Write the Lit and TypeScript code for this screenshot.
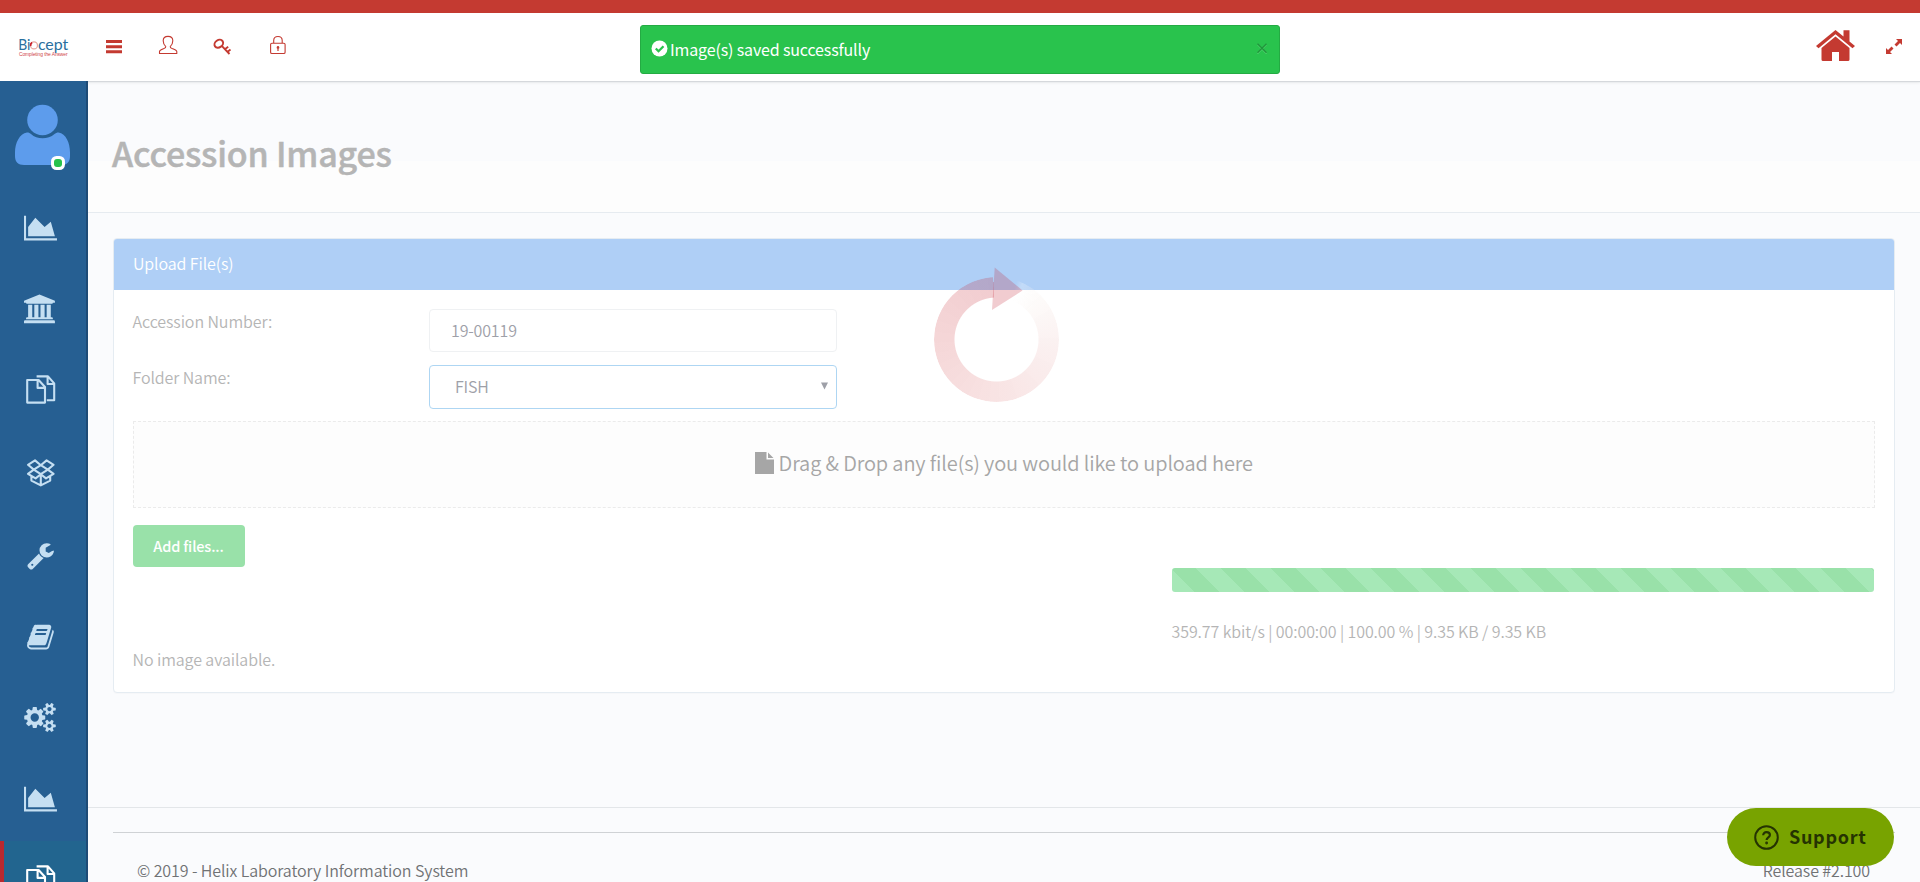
import { LitElement, html, svg, css } from "lit";
import { customElement } from "lit/decorators.js";

const chart = svg`<path transform="translate(24 25.6) scale(.0161)" d="M2048 1536v128h-2048v-1536h128v1408h1920zm-384-1024l256 896h-1664v-576l448-576 576 576z"/>`;
const bank = svg`<path transform="translate(24 24.5) scale(.0161)" d="M960 0l960 384v128h-128q0 26-20.5 45t-48.5 19h-1526q-28 0-48.5-19t-20.5-45h-128v-128zm-704 640h256v768h128v-768h256v768h128v-768h256v768h128v-768h256v768h59q28 0 48.5 19t20.5 45v64h-1664v-64q0-26 20.5-45t48.5-19h59v-768zm1595 960q28 0 48.5 19t20.5 45v128h-1920v-128q0-26 20.5-45t48.5-19h1782z"/>`;
const files = svg`<g fill="none" stroke="currentColor" stroke-width="2.1" stroke-linejoin="round"><path d="M27.2 29H38.6L45 36V51.6H27.2ZM37.6 29V36.9H45"/><path d="M36.6 25.4H48L54.2 32.4V49.2H46.8M47.6 25.4V33H54.2"/></g>`;
const box = svg`<g fill="none" stroke="currentColor" stroke-width="2.1" stroke-linejoin="round"><path d="M35 27.4L40.8 32.2L33.8 36.6L28 31.8ZM46.6 27.4L40.8 32.2L47.8 36.6L53.6 31.8ZM33.8 36.6L40.8 41.2L35.6 45.4L28 40.8ZM47.8 36.6L40.8 41.2L46 45.4L53.6 40.8ZM40.8 32.2L47.8 36.6M31.4 43.2V47.6L40.8 52.4L50.2 47.6V43.2M40.8 41.5V52.4"/></g>`;
const wrench = svg`<path transform="translate(26.1 27.1) scale(.0161)" d="M448 1472q0-26-19-45t-45-19-45 19-19 45 19 45 45 19 45-19 19-45zm644-420l-682 682q-37 37-90 37-52 0-91-37l-106-108q-38-36-38-90 0-53 38-91l681-681q39 98 114.5 173.5t173.5 114.5zm634-435q0 39-23 106-47 134-164.5 217.5t-258.5 83.5q-185 0-316.5-131.5t-131.5-316.5 131.5-316.5 316.5-131.5q58 0 121.5 16.5t107.5 46.5q16 11 16 28t-16 28l-293 169v224l193 107q5-3 79-48.5t135.5-81 70.5-35.5q15 0 23.5 10t8.5 25z"/>`;
const book = svg`<path transform="translate(26 26.7) scale(.0161)" d="M1703 478q40 57 18 129l-275 906q-19 64-76.5 107.5t-122.5 43.5h-923q-77 0-148.5-53.5t-99.5-131.5q-24-67-2-127 0-4 3-27t4-37q1-8-3-21.5t-3-19.5q2-11 8-21t16.5-23.5 16.5-23.5q23-38 45-91.5t30-91.5q3-10 .5-30t-.5-28q3-11 17-28t17-23q21-36 42-92t25-90q1-9-2.5-32t.5-28q4-13 22-30.5t22-22.5q19-26 42.5-84.5t27.5-96.5q1-8-3-25.5t-2-26.5q2-8 9-18t18-23 17-21q8-12 16.5-30.5t15-35 16-36 19.5-32 26.5-23.5 36-11.5 47.5 5.5l-1 3q38-9 51-9h761q74 0 114 56t18 130l-274 906q-36 119-71.5 153.5t-128.5 34.5h-869q-27 0-38 15-11 16-1 43 24 70 144 70h923q29 0 56-15.5t35-41.5l300-987q7-22 5-57 38 15 59 43zm-1064 2q-4 13 2 22.5t20 9.5h608q13 0 25.5-9.5t16.5-22.5l21-64q4-13-2-22.5t-20-9.5h-608q-13 0-25.5 9.5t-16.5 22.5zm-83 256q-4 13 2 22.5t20 9.5h608q13 0 25.5-9.5t16.5-22.5l21-64q4-13-2-22.5t-20-9.5h-608q-13 0-25.5 9.5t-16.5 22.5z"/>`;
const cogs = svg`<path transform="translate(25.3 25.8) scale(.0164)" d="M832 896q0-106-75-181t-181-75-181 75-75 181 75 181 181 75 181-75 75-181zm768 512q0-52-38-90t-90-38-90 38-38 90q0 53 37.5 90.5t90.5 37.5 90.5-37.5 37.5-90.5zm0-1024q0-52-38-90t-90-38-90 38-38 90q0 53 37.5 90.5t90.5 37.5 90.5-37.5 37.5-90.5zm-384 421v185q0 10-7 19.5t-16 10.5l-155 24q-11 35-32 76 34 48 90 115 7 11 7 20 0 12-7 19-23 30-82.5 89.5t-78.5 59.5q-11 0-21-7l-115-90q-37 19-77 31-11 108-23 155-7 24-30 24h-186q-11 0-20-7.5t-10-17.5l-23-153q-34-10-75-31l-118 89q-7 7-20 7-11 0-21-8-144-133-144-160 0-9 7-19 10-14 41-53t47-61q-23-44-35-82l-152-24q-10-1-17-9.5t-7-19.5v-185q0-10 7-19.5t16-10.5l155-24q11-35 32-76-34-48-90-115-7-11-7-20 0-12 7-20 22-30 82-89t79-59q11 0 21 7l115 90q34-18 77-32 11-108 23-154 7-24 30-24h186q11 0 20 7.5t10 17.5l23 153q34 10 75 31l118-89q8-7 20-7 11 0 21 8 144 133 144 160 0 8-7 19-12 16-42 54t-45 60q23 48 34 82l152 23q10 2 17 10.5t7 19.5zm640 533v140q0 16-149 31-12 27-30 52 51 113 51 138 0 4-4 7-122 71-124 71-8 0-46-47t-52-68q-20 2-30 2t-30-2q-14 21-52 68t-46 47q-2 0-124-71-4-3-4-7 0-25 51-138-18-25-30-52-149-15-149-31v-140q0-16 149-31 13-29 30-52-51-113-51-138 0-4 4-7 4-2 35-20t59-34 30-16q8 0 46 46.5t52 67.5q20-2 30-2t30 2q51-71 92-112l6-2q4 0 124 70 4 3 4 7 0 25-51 138 17 23 30 52 149 15 149 31zm0-1024v140q0 16-149 31-12 27-30 52 51 113 51 138 0 4-4 7-122 71-124 71-8 0-46-47t-52-68q-20 2-30 2t-30-2q-14 21-52 68t-46 47q-2 0-124-71-4-3-4-7 0-25 51-138-18-25-30-52-149-15-149-31v-140q0-16 149-31 13-29 30-52-51-113-51-138 0-4 4-7 4-2 35-20t59-34 30-16q8 0 46 46.5t52 67.5q20-2 30-2t30 2q51-71 92-112l6-2q4 0 124 70 4 3 4 7 0 25-51 138 17 23 30 52 149 15 149 31z"/>`;

@customElement("side-nav")
class SideNav extends LitElement {
  static styles = css`
    :host { display: flex; flex-direction: column; flex: none; box-sizing: border-box; width: 88px; height: 801px; overflow: hidden; position: relative; z-index: 2; background: #265f92; border-right: 2px solid #1e4b76; color: #c5dff2; }
    .profile { flex: none; height: 107px; }
    .profile svg { display: block; }
    .item { flex: none; height: 81.57px; }
    .item svg { display: block; width: 86px; height: 81.57px; fill: currentColor; }
    .active { background: #22658f; color: #fff; box-shadow: inset 4px 0 #b9292f; }
  `;
  render() {
    const items = [chart, bank, files, box, wrench, book, cogs, chart, files];
    return html`
      <div class="profile">
        <svg width="86" height="107" viewBox="0 81 86 107">
          <circle cx="42.5" cy="120" r="15.3" fill="#5d9cec"/>
          <path fill="#5d9cec" d="M27 132.4C29 132.4 30 133 31 134C37 139.8 48 139.8 54.5 134C55.5 133 57 132.4 58.5 132.4C66 133.5 70 143 70 152.5V156C70 162 67 165 61 165H24C18 165 15 162 15 156V152.5C15 143 19.5 133.5 27 132.4Z"/>
          <rect x="51" y="156" width="14" height="14" rx="5.5" fill="#fff"/>
          <rect x="54" y="159" width="8" height="8" rx="3" fill="#27c24c"/>
        </svg>
      </div>
      ${items.map((icon, i) => html`<div class="item ${i === 8 ? "active" : ""}"><svg viewBox="0 0 86 81.57">${icon}</svg></div>`)}
    `;
  }
}

@customElement("top-bar")
class TopBar extends LitElement {
  static styles = css`
    :host { display: flex; box-sizing: border-box; height: 81px; border-top: 13px solid #c43a31; background: #fff; position: relative; z-index: 1; box-shadow: 0 1px 1px #d5d8dc, 0 2px 3px rgba(0,0,0,.06); justify-content: space-between; color: #c43a31; }
    .tools { display: block; fill: currentColor; }
    .logo { font: 400 15.5px Lato, sans-serif; fill: #2a6f9e; }
    .tag { font: 400 4.8px "Liberation Sans", sans-serif; fill: #cf3f48; }
  `;
  render() {
    return html`
      <svg class="tools" width="320" height="68" viewBox="0 13 320 68">
        <text class="logo" x="18.2" y="50" textLength="12" lengthAdjust="spacingAndGlyphs">Bi</text>
        <circle cx="34" cy="45.4" r="3.5" fill="none" stroke="#e8a79f" stroke-width="1.3"/>
        <path d="M30.6 46A3.5 3.5 0 0 1 32 42.5" fill="none" stroke="#c8202c" stroke-width="1.9"/>
        <text class="logo" x="38" y="50" textLength="30" lengthAdjust="spacingAndGlyphs">cept</text>
        <text class="tag" x="19" y="56.3" textLength="48.5" lengthAdjust="spacingAndGlyphs">Completing the Answer</text>
        <path d="M106 40h16v3h-16zM106 45.2h16v3h-16zM106 50.3h16v3h-16z"/>
        <path fill="none" stroke="currentColor" stroke-width="1.1" stroke-linejoin="round" d="M159.5 53.5V51.5C159.7 50 161.5 49.4 163.5 48.7C165 48.2 166 47.6 165.8 46.7C163.8 44.8 163.2 42.5 163.2 40.7C163.2 38 165.2 36.4 168 36.4S172.8 38 172.8 40.7C172.8 42.5 172.2 44.8 170.2 46.7C170 47.6 171 48.2 172.5 48.7C174.5 49.4 176.5 50 176.8 51.5V53.5Z"/>
        <g fill="none" stroke="currentColor"><ellipse cx="218.8" cy="43.7" rx="4.6" ry="3.6" transform="rotate(-35 218.8 43.7)" stroke-width="2"/><path d="M222 46.2L229.5 54M224.5 49.5L228.2 46.8M227 52.3L230.5 49.6" stroke-width="1.9"/></g>
        <g fill="none" stroke="currentColor" stroke-width="1.1"><rect x="270.6" y="43.3" width="14.5" height="10.2" rx="1.3"/><path d="M273.7 43V40.5C273.7 38 275.5 36.5 278 36.5S282.2 38 282.2 40.5V43"/></g>
        <path d="M278 46a1.5 1.5 0 0 1 .6 2.8v2.2h-1.2v-2.2a1.5 1.5 0 0 1 .6-2.8z"/>
      </svg>
      <svg class="tools" width="140" height="68" viewBox="1780 13 140 68">
        <path d="M1835.5 36.5L1849.5 48V59.5Q1849.5 61 1848 61H1839V52H1832V61H1823Q1821.5 61 1821.5 59.5V48Z"/>
        <path d="M1835.5 30L1843.5 36.5V30.3H1849.5V41.5L1855 46L1852.5 48.3L1835.5 34.3L1818.5 48.3L1816 46Z"/>
        <path d="M1896 39h6v6l-2-2-3.5 3.5-2-2 3.5-3.5zM1886 48v6h6l-2-2 3.5-3.5-2-2-3.5 3.5z"/>
      </svg>
    `;
  }
}

@customElement("app-root")
class AppRoot extends LitElement {
  static styles = css`
    :host { display: block; position: relative; width: 100%; height: 882px; overflow: hidden; background: #fafbfd; font: 350 16px/24px "Noto Sans CJK SC", "Source Sans Pro", sans-serif; letter-spacing: -.09px; color: #b5b5b5; }
    .shell { display: flex; height: 801px; }
    main { flex: 1; min-width: 0; display: flex; flex-direction: column; }
    .title { box-sizing: border-box; height: 132px; padding: 48px 24px 0; border-bottom: 1px solid #e6ebf0; background: linear-gradient(#fafbfd 80px, #fdfdfd 80px); }
    h1 { margin: 0; font-size: 34px; line-height: 48px; font-weight: 500; letter-spacing: -.2px; white-space: nowrap; -webkit-text-stroke: .5px #b5b5b5; }
    .panel { box-sizing: border-box; margin: 25px 25px 0; height: 456px; border: 1px solid #e5ecf2; border-radius: 4px; background: #fff; box-shadow: 0 1px 1px rgba(0,0,0,.02); }
    .heading { height: 51px; padding: 0 0 2px 19px; box-sizing: border-box; line-height: 49px; color: #fff; background: #afcff6; border-radius: 3px 3px 0 0; }
    .body { padding: 19px 19px 0 18.5px; }
    .row { display: grid; grid-template-columns: 296.5px 408px; height: 56px; }
    .field { box-sizing: border-box; height: 43px; border: 1px solid #eff1f3; border-radius: 4px; padding: 0 8px 0 21px; color: #9ea0a8; display: flex; justify-content: space-between; align-items: center; letter-spacing: -.15px; }
    .select { height: 44px; border-color: #aed6f3; padding: 0 8px 1px 25px; }
    .drop { box-sizing: border-box; height: 87px; border: 1px dashed #ebebeb; background: #fdfdfd; display: flex; justify-content: center; align-items: center; gap: 5px; padding-bottom: 2px; font-size: 20px; letter-spacing: -.12px; color: #a6a6a6; }
    .add { width: 112px; height: 42px; margin-top: 17px; border-radius: 4px; background: #99e1a9; color: #fff; text-align: center; line-height: 42px; font-size: 14.5px; font-weight: 500; letter-spacing: -.15px; }
    .progress { margin: 1px 1px 0 1039px; }
    .bar { height: 24px; border-radius: 3px; background: repeating-linear-gradient(45deg, #a6e8b7 -2px 15.68px, #99e1a9 15.68px 33.35px); }
    .stats { margin-top: 27px; }
    .none { margin-top: 4px; }
    footer { margin-top: 114px; border-top: 1px solid #e3e6e9; padding: 24px 25px 0; color: #707274; }
    .copy { border-top: 1px solid #cfd2d5; padding: 25px 25px 0 24px; display: flex; justify-content: space-between; }
    .alert { position: absolute; z-index: 2; left: 640px; top: 25px; width: 640px; height: 49px; box-sizing: border-box; border: 1px solid #24ab43; border-radius: 3px; background: #29c34d; color: #fff; display: flex; align-items: center; padding: 0 11px 2px 10px; gap: 2px; font-weight: 400; letter-spacing: -.15px; }
    .close { margin-left: auto; }
    .spinner { position: absolute; left: 930px; top: 260px; }
    .ring { position: absolute; left: 934px; top: 277px; width: 125px; height: 125px; border-radius: 50%; background: conic-gradient(from -3deg, transparent 0deg 22deg, rgba(255,255,255,.25) 28deg, rgba(240,225,215,.14) 50deg, rgba(225,150,150,.15) 105deg, rgba(215,90,90,.16) 175deg, rgba(205,50,55,.2) 275deg, rgba(195,35,50,.23) 360deg); -webkit-mask: radial-gradient(circle, transparent 41.5px, #000 42.5px); }
    .support { position: absolute; z-index: 3; left: 1727px; top: 808px; width: 167px; height: 58px; border-radius: 29px; background: #78a300; color: #253302; display: flex; align-items: center; box-sizing: border-box; padding-left: 27px; gap: 10px; font: 700 18px/24px "Noto Sans CJK SC", sans-serif; letter-spacing: .7px; }
    .support span { padding-bottom: 2px; }
  `;
  render() {
    return html`
      <top-bar></top-bar>
      <div class="shell">
        <side-nav></side-nav>
        <main>
          <div class="title"><h1>Accession Images</h1></div>
          <section class="panel">
            <div class="heading">Upload File(s)</div>
            <div class="body">
              <div class="row"><div class="label">Accession Number:</div><div class="field">19-00119</div></div>
              <div class="row"><div class="label">Folder Name:</div><div class="field select">FISH<svg width="7" height="8"><path d="M0 .5H7L3.5 7.5Z" fill="#9ea0a8"/></svg></div></div>
              <div class="drop"><svg width="19" height="22" viewBox="0 0 19 22" fill="#a6a6a6"><path d="M0 0H11.5V7.5H19V22H0ZM13 0.5L18.5 6H13Z"/></svg><span>Drag &amp; Drop any file(s) you would like to upload here</span></div>
              <div class="add">Add files...</div>
              <div class="progress"><div class="bar"></div><div class="stats">359.77 kbit/s | 00:00:00 | 100.00 % | 9.35 KB / 9.35 KB</div></div>
              <div class="none">No image available.</div>
            </div>
          </section>
          <footer><div class="copy"><span>© 2019 - Helix Laboratory Information System</span><span>Release #2.100</span></div></footer>
        </main>
      </div>
      <div class="ring"></div>
      <svg class="spinner" width="100" height="60" viewBox="930 260 100 60"><path d="M994.7 267.5L1022.5 290.5L992 310Z" fill="rgba(195,35,50,.23)"/></svg>
      <div class="alert">
        <svg width="17" height="17" viewBox="0 0 17 17"><circle cx="8.5" cy="8.5" r="8" fill="#fff"/><path d="M4.8 8.5L7.5 11.2L12.5 6.2" fill="none" stroke="#29c34d" stroke-width="2.3"/></svg>
        <span>Image(s) saved successfully</span>
        <svg class="close" width="12" height="11" viewBox="0 0 12 11"><path d="M1.5 1.7L10.5 10.7M10.5 1.7L1.5 10.7" stroke="#57d273" stroke-width="1.2"/><path d="M1.5 .7L10.5 9.7M10.5 .7L1.5 9.7" stroke="#21963c" stroke-width="1.4"/></svg>
      </div>
      <div class="support">
        <svg width="25" height="25" viewBox="0 0 25 25" fill="none" stroke="currentColor" stroke-width="2"><circle cx="12.5" cy="12.5" r="11.3"/><path d="M9.2 10.3C9.2 8.3 10.6 7.1 12.5 7.1S15.9 8.3 15.9 10C15.9 12.5 12.6 12.3 12.6 15" stroke-width="2.2"/><circle cx="12.6" cy="18" r=".6" stroke-width="1.6"/></svg>
        <span>Support</span>
      </div>
    `;
  }
}
